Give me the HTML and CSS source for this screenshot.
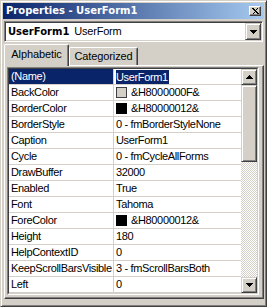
FILE: index.html
```html
<!DOCTYPE html>
<html>
<head>
<meta charset="utf-8">
<link rel="stylesheet" href="styles.css">
</head>
<body>
<div class="window">
  <div class="titlebar">
    <span class="title">Properties - UserForm1</span>
    <span class="close"><svg width="8" height="7" viewBox="0 0 8 7"><path d="M1 0h2v1h1v1h1V1h1V0h1v1H6v1H5v1h1v1h1v1h1v1H6V5H5V4H4v1H3v1H1V6h1V5h1V4h1V3H3V2H2V1H1z" fill="#000" shape-rendering="crispEdges"/></svg></span>
  </div>
  <div class="combo">
    <span class="combo-text"><b class="obj-name">UserForm1</b> UserForm</span>
    <span class="btn combo-btn"><svg width="7" height="4" viewBox="0 0 7 4"><path d="M0 0h7v1H6v1H5v1H4v1H3V3H2V2H1V1H0z" fill="#000"/></svg></span>
  </div>
  <div class="tabs">
    <div class="tab active">Alphabetic</div>
    <div class="tab">Categorized</div>
  </div>
  <div class="panel">
    <div class="grid">
      <div class="grid-inner">
        <div class="rows">
          <div class="row selected"><div class="name">(Name)</div><div class="value"><span class="sel">UserForm1</span></div></div>
          <div class="row"><div class="name">BackColor</div><div class="value"><span class="swatch face"></span>&amp;H8000000F&amp;</div></div>
          <div class="row"><div class="name">BorderColor</div><div class="value"><span class="swatch black"></span>&amp;H80000012&amp;</div></div>
          <div class="row"><div class="name">BorderStyle</div><div class="value">0 - fmBorderStyleNone</div></div>
          <div class="row"><div class="name">Caption</div><div class="value">UserForm1</div></div>
          <div class="row"><div class="name">Cycle</div><div class="value">0 - fmCycleAllForms</div></div>
          <div class="row"><div class="name">DrawBuffer</div><div class="value">32000</div></div>
          <div class="row"><div class="name">Enabled</div><div class="value">True</div></div>
          <div class="row"><div class="name">Font</div><div class="value">Tahoma</div></div>
          <div class="row"><div class="name">ForeColor</div><div class="value"><span class="swatch black"></span>&amp;H80000012&amp;</div></div>
          <div class="row"><div class="name">Height</div><div class="value">180</div></div>
          <div class="row"><div class="name">HelpContextID</div><div class="value">0</div></div>
          <div class="row"><div class="name">KeepScrollBarsVisible</div><div class="value">3 - fmScrollBarsBoth</div></div>
          <div class="row"><div class="name">Left</div><div class="value">0</div></div>
        </div>
        <div class="scrollbar">
          <div class="btn sb-btn"><svg width="7" height="4" viewBox="0 0 7 4"><path d="M3 0h1v1h1v1h1v1h1v1H0V3h1V2h1V1h1z" fill="#000"/></svg></div>
          <div class="btn thumb"></div>
          <div class="track"></div>
          <div class="btn sb-btn"><svg width="7" height="4" viewBox="0 0 7 4"><path d="M0 0h7v1H6v1H5v1H4v1H3V3H2V2H1V1H0z" fill="#000"/></svg></div>
        </div>
      </div>
    </div>
  </div>
</div>
</body>
</html>
```
FILE: styles.css
```css
html, body {
  margin: 0;
  padding: 0;
  background: #D4D0C8;
}
body {
  font-family: "Liberation Sans", Arial, sans-serif;
  font-size: 11px;
  letter-spacing: -0.35px;
  color: #000;
}
.window {
  width: 267px;
  height: 307px;
  box-sizing: border-box;
  background: #D4D0C8;
  border: 1px solid;
  border-color: #D4D0C8 #404040 #404040 #D4D0C8;
  box-shadow: inset 1px 1px #fff, inset -1px -1px #808080;
  padding: 2px;
}
.titlebar {
  height: 16px;
  display: flex;
  align-items: center;
  justify-content: space-between;
  padding: 0 2px 0 3px;
  background: linear-gradient(to right, #0A246A, #A6CAF0);
  color: #fff;
}
.title {
  font-family: "DejaVu Sans", Verdana, sans-serif;
  font-weight: bold;
  font-size: 10px;
  letter-spacing: 0;
  line-height: 16px;
}
.btn {
  box-sizing: border-box;
  background: #D4D0C8;
  border: 1px solid;
  border-color: #D4D0C8 #404040 #404040 #D4D0C8;
  box-shadow: inset 1px 1px #fff, inset -1px -1px #808080;
  display: flex;
  align-items: center;
  justify-content: center;
}
.close {
  width: 12px;
  height: 10px;
  box-sizing: border-box;
  background: #D4D0C8;
  border: 1px solid;
  border-color: #fff #404040 #404040 #fff;
  box-shadow: inset -1px -1px #808080;
  display: flex;
  align-items: center;
  justify-content: center;
  margin-right: 1px;
}
.combo {
  margin: 2px 1px 0 1px;
  height: 21px;
  box-sizing: border-box;
  border: 1px solid;
  border-color: #808080 #fff #fff #808080;
  box-shadow: inset 1px 1px #404040, inset -1px -1px #D4D0C8;
  background: #fff;
  display: flex;
  align-items: stretch;
  padding: 1px;
}
.combo-text {
  flex: 1;
  padding-left: 2px;
  line-height: 17px;
  letter-spacing: -0.2px;
}
.obj-name {
  font-family: "DejaVu Sans", Verdana, sans-serif;
  font-size: 10px;
  letter-spacing: 0;
  margin-right: 2px;
}
.combo-btn {
  width: 16px;
}
.tabs {
  display: flex;
  align-items: flex-end;
  height: 21px;
  margin: 2px 1px 0 1px;
}
.tab {
  box-sizing: border-box;
  border-top: 1px solid #fff;
  border-left: 1px solid #fff;
  border-right: 1px solid #404040;
  box-shadow: inset -1px 0 #808080;
  border-radius: 2px 2px 0 0;
  background: #D4D0C8;
  text-align: center;
  line-height: 13px;
  height: 18px;
  width: 69px;
  padding-top: 2px;
  letter-spacing: -0.1px;
}
.tab.active {
  position: relative;
  z-index: 1;
  height: 22px;
  width: 65px;
  margin-bottom: -1px;
  padding-top: 3px;
}
.panel {
  margin: 0 0 0 1px;
  box-sizing: border-box;
  border: 1px solid;
  border-color: #fff #404040 #404040 #fff;
  box-shadow: inset -1px -1px #808080;
  padding: 1px 4px 3px 2px;
}
.grid {
  border: 1px solid;
  border-color: #808080 #fff #fff #808080;
}
.grid-inner {
  border: 1px solid;
  border-color: #404040 #D4D0C8 #D4D0C8 #404040;
  background: #fff;
  display: flex;
  height: 224px;
}
.rows {
  flex: 1;
  overflow: hidden;
}
.row {
  display: grid;
  grid-template-columns: 105px 1fr;
  height: 16px;
  box-sizing: border-box;
  border-bottom: 1px solid #D4D0C8;
  line-height: 15px;
  white-space: nowrap;
}
.name {
  padding-left: 2px;
  border-right: 1px solid #D4D0C8;
  overflow: hidden;
}
.value {
  padding-left: 2px;
  overflow: hidden;
  display: flex;
  align-items: center;
}
.row.selected .name {
  background: #0A246A;
  color: #fff;
}
.sel {
  background: #0A246A;
  color: #fff;
  padding: 0 1px 0 0;
  line-height: 14px;
}
.swatch {
  display: inline-block;
  width: 9px;
  height: 9px;
  border: 1px solid #000;
  margin-right: 4px;
  flex: none;
}
.swatch.face {
  background: #D4D0C8;
  border-color: #404040;
}
.swatch.black {
  background: #000;
}
.scrollbar {
  width: 16px;
  display: flex;
  flex-direction: column;
}
.sb-btn {
  height: 16px;
}
.thumb {
  height: 77px;
}
.track {
  flex: 1;
  background-color: #fff;
  background-image: conic-gradient(#D4D0C8 25%, #fff 0 50%, #D4D0C8 0 75%, #fff 0);
  background-size: 2px 2px;
}
```
